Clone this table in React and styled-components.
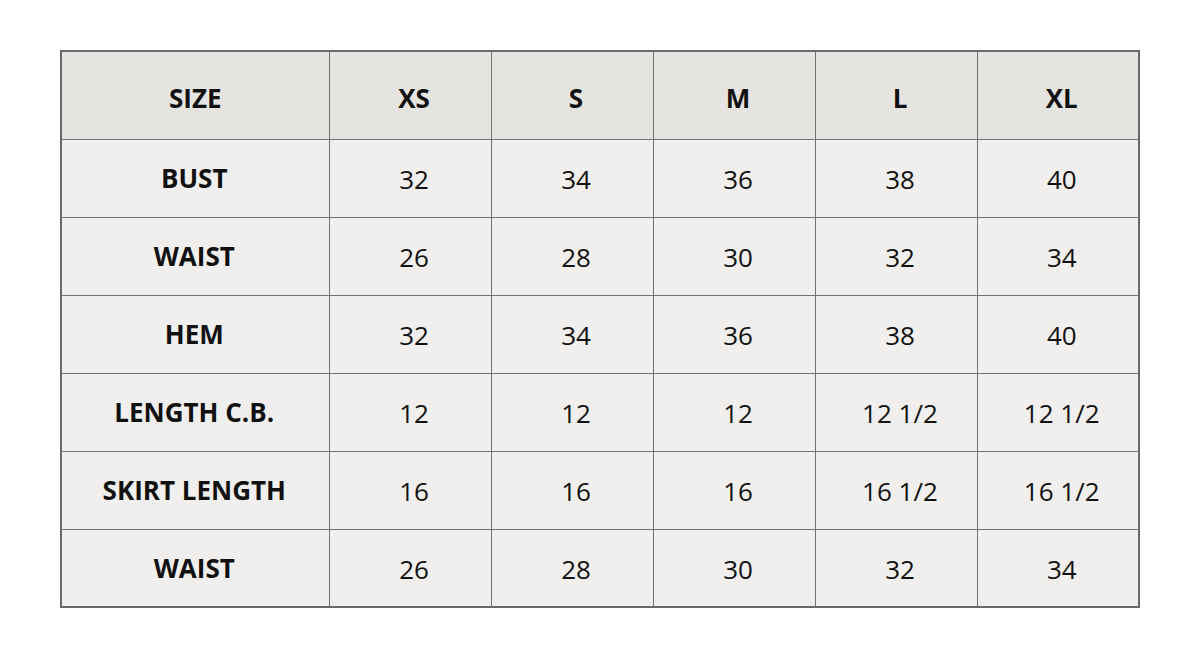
import React from 'react';
import styled, { createGlobalStyle } from 'styled-components';

const GlobalStyle = createGlobalStyle`
  body {
    margin: 0;
    background: #ffffff;
    font-family: "Open Sans", "Liberation Sans", sans-serif;
  }
`;

const sizes = ['XS', 'S', 'M', 'L', 'XL'];

const rows = [
  { label: 'BUST', values: ['32', '34', '36', '38', '40'] },
  { label: 'WAIST', values: ['26', '28', '30', '32', '34'] },
  { label: 'HEM', values: ['32', '34', '36', '38', '40'] },
  { label: 'LENGTH C.B.', values: ['12', '12', '12', '12 1/2', '12 1/2'] },
  { label: 'SKIRT LENGTH', values: ['16', '16', '16', '16 1/2', '16 1/2'] },
  { label: 'WAIST', values: ['26', '28', '30', '32', '34'] },
];

function App() {
  return (
    <Page>
      <GlobalStyle />
      <Table>
        <colgroup>
          <col style={{ width: 268 }} />
          {sizes.map((s) => (
            <col key={s} style={{ width: 162 }} />
          ))}
        </colgroup>
        <thead>
          <HeadRow>
            <HeadCell $first>SIZE</HeadCell>
            {sizes.map((s) => (
              <HeadCell key={s}>{s}</HeadCell>
            ))}
          </HeadRow>
        </thead>
        <tbody>
          {rows.map((row, i) => (
            <BodyRow key={i}>
              <LabelCell>{row.label}</LabelCell>
              {row.values.map((v, j) => (
                <ValueCell key={j}>{v}</ValueCell>
              ))}
            </BodyRow>
          ))}
        </tbody>
      </Table>
    </Page>
  );
}

const Page = styled.div`
  width: 1200px;
  height: 660px;
  padding: 50px 0 0 60px;
  box-sizing: border-box;
`;

const Table = styled.table`
  border-collapse: collapse;
  table-layout: fixed;
  width: 1080px;
  border: 2px solid #6a6a6a;
  color: #111;
`;

const HeadRow = styled.tr`
  height: 88px;
  background: #e5e4e1;
`;

const BodyRow = styled.tr`
  height: 78px;
  background: #f0efed;
`;

const Cell = styled.td`
  border: 1px solid #727272;
  text-align: center;
  vertical-align: middle;
  padding: 0;
  font-size: 26px;
  line-height: 1;
`;

const HeadCell = styled(Cell).attrs({ as: 'th' })`
  font-weight: 700;
  padding: 6px 0 0 ${(p) => (p.$first ? '0' : '8px')};
`;

const LabelCell = styled(Cell)`
  font-weight: 700;
  padding-right: 2px;
`;

const ValueCell = styled(Cell)`
  font-weight: 400;
  padding: 2px 0 0 8px;
`;

export default App;
